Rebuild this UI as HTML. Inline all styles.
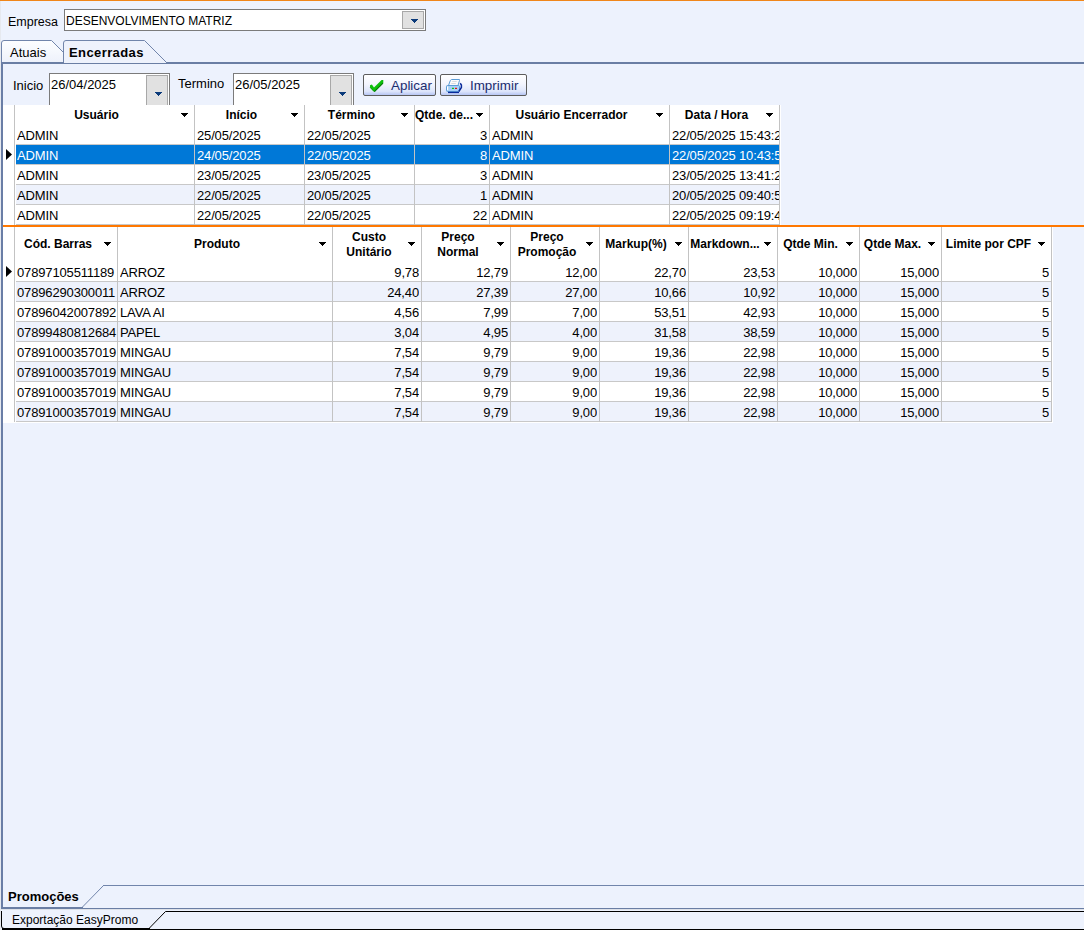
<!DOCTYPE html>
<html><head><meta charset="utf-8">
<style>
*{box-sizing:border-box;margin:0;padding:0}
html,body{width:1084px;height:930px;overflow:hidden;background:#edf2fd;font-family:"Liberation Sans",sans-serif;font-size:13px;color:#000}
.a{position:absolute}
.t{position:absolute;white-space:nowrap;line-height:16px}
.b{font-weight:bold}
.grid{position:absolute;background:#fff;overflow:hidden}
.vl{position:absolute;width:1px;background:#c3c3c3}
.hl{position:absolute;height:1px;background:#c8c8c8}
.cell{position:absolute;white-space:nowrap;overflow:hidden;line-height:20px;height:20px;letter-spacing:-0.15px}
.r{text-align:right}
.hd{position:absolute;font-weight:bold;font-size:12px;text-align:center;white-space:nowrap;overflow:hidden}
.arr{position:absolute;width:0;height:0;border-left:3.5px solid transparent;border-right:3.5px solid transparent;border-top:4px solid #000}
.navarr{position:absolute;width:0;height:0;border-left:3.5px solid transparent;border-right:3.5px solid transparent;border-top:4px solid #0b3a7a}
</style></head><body>
<!-- top orange line -->
<div class="a" style="left:0;top:0;width:1084px;height:1px;background:#f0861a"></div>
<div class="a" style="left:0;top:1px;width:1px;height:929px;background:#e6e9ef"></div>

<!-- Empresa -->
<div class="t" style="left:8px;top:14px;font-size:12.5px">Empresa</div>
<div class="a" style="left:64px;top:9px;width:362px;height:22px;border:1px solid #7b7b7b;background:#fff"></div>
<div class="t" style="left:66px;top:13px;font-size:12px">DESENVOLVIMENTO MATRIZ</div>
<div class="a" style="left:402px;top:11px;width:22px;height:18px;border:1px solid #a8a8a8;background:#e1e1e1"></div>
<svg class="a" style="left:411px;top:19px" width="7" height="4" shape-rendering="crispEdges" fill="#0b3a7a"><rect x="0" y="0" width="7" height="1"/><rect x="1" y="1" width="5" height="1"/><rect x="2" y="2" width="3" height="1"/><rect x="3" y="3" width="1" height="1"/></svg>

<!-- tabs -->
<svg class="a" style="left:0;top:0" width="1084" height="70">
  <defs><linearGradient id="tg" x1="0" y1="0" x2="0" y2="1"><stop offset="0" stop-color="#fdfeff"/><stop offset="1" stop-color="#edf1fb"/></linearGradient></defs><path d="M1.5 63 V43 Q1.5 40.5 4 40.5 H51.5 L63 52 V63 Z" fill="url(#tg)" stroke="none"/><path d="M1.5 63 V43 Q1.5 40.5 4 40.5 H51.5 L63 52" fill="none" stroke="#7185ab" stroke-width="1"/>
  <path d="M63.5 63 V43 Q63.5 40.5 66 40.5 H144.5 L166.5 62.5" fill="#eef2fc" stroke="#7185ab" stroke-width="1"/>
  <rect x="1" y="62" width="63" height="2" fill="#6a7ea4"/>
  <rect x="63" y="63" width="104" height="1" fill="#6a7ea4"/>
  <rect x="166" y="62" width="918" height="2" fill="#6a7ea4"/>
</svg>
<div class="t" style="left:10px;top:45px">Atuais</div>
<div class="t b" style="left:69px;top:45px;letter-spacing:0.4px">Encerradas</div>

<!-- panel left border -->
<div class="a" style="left:1px;top:62px;width:2px;height:847px;background:#6a7ea6"></div>

<!-- filters -->
<div class="t" style="left:13px;top:78px">Inicio</div>
<div class="a" style="left:49px;top:73px;width:121px;height:40px;border:1px solid #7b7b7b;background:#fff"></div>
<div class="t" style="left:51px;top:77px">26/04/2025</div>
<div class="a" style="left:146px;top:75px;width:22px;height:36px;border:1px solid #a8a8a8;background:#e1e1e1"></div>
<svg class="a" style="left:155px;top:92px" width="7" height="4" shape-rendering="crispEdges" fill="#0b3a7a"><rect x="0" y="0" width="7" height="1"/><rect x="1" y="1" width="5" height="1"/><rect x="2" y="2" width="3" height="1"/><rect x="3" y="3" width="1" height="1"/></svg>

<div class="t" style="left:178px;top:76px">Termino</div>
<div class="a" style="left:233px;top:73px;width:121px;height:40px;border:1px solid #7b7b7b;background:#fff"></div>
<div class="t" style="left:235px;top:77px">26/05/2025</div>
<div class="a" style="left:330px;top:75px;width:22px;height:36px;border:1px solid #a8a8a8;background:#e1e1e1"></div>
<svg class="a" style="left:339px;top:92px" width="7" height="4" shape-rendering="crispEdges" fill="#0b3a7a"><rect x="0" y="0" width="7" height="1"/><rect x="1" y="1" width="5" height="1"/><rect x="2" y="2" width="3" height="1"/><rect x="3" y="3" width="1" height="1"/></svg>

<!-- buttons -->
<div class="a" style="left:363px;top:74px;width:73px;height:22px;border:1px solid #5c5c5c;border-radius:2px;background:linear-gradient(#ffffff 0%,#f3f5fe 45%,#dde5fb 82%,#b6c5f4 100%)"></div>
<svg class="a" style="left:364px;top:75px" width="24" height="20"><path d="M6 10.2 L7.9 9.6 L10 12.6 L17.6 5 L19.3 5 L19.3 8 L10.2 17 L6 12.6 Z" fill="#0dbf0d"/><path d="M10.4 16.6 L19 8.2" stroke="#067206" stroke-width="1.1"/><path d="M6.2 12.4 L10 16.4" stroke="#089408" stroke-width="0.8"/></svg>
<div class="t" style="left:391px;top:78px;color:#1b2c6e;font-size:13.4px">Aplicar</div>
<div class="a" style="left:440px;top:74px;width:87px;height:22px;border:1px solid #5c5c5c;border-radius:2px;background:linear-gradient(#ffffff 0%,#f3f5fe 45%,#dde5fb 82%,#b6c5f4 100%)"></div>
<svg class="a" style="left:442px;top:75px" width="22" height="20">
 <path d="M9.5 4.5 H17.5 V5.5 L16 10.5 H6.5 L8.3 5.5 Z" fill="#fafafa" stroke="#5b9bd5" stroke-width="1"/>
 <rect x="10.2" y="6" width="4.5" height="0.8" fill="#cfd3d8"/><rect x="9.3" y="8" width="4.5" height="0.8" fill="#cfd3d8"/>
 <rect x="4.5" y="10.5" width="13" height="6" rx="1" fill="#a6cff7" stroke="#5b9bd5" stroke-width="1"/>
 <rect x="5" y="11.5" width="1.2" height="3.5" fill="#fff"/>
 <path d="M18.2 8.3 L19.4 10 V12.5 L16.8 16.5" stroke="#0a2a9a" stroke-width="1.5" fill="none"/>
 <rect x="6" y="16.8" width="11" height="1.3" fill="#0a2a9a"/>
 <rect x="10" y="12.8" width="2" height="1.2" fill="#10c010"/><rect x="13" y="12.8" width="2" height="1.2" fill="#e01010"/>
</svg>
<div class="t" style="left:470px;top:78px;color:#1b2c6e;font-size:13.4px">Imprimir</div>

<!-- GRID 1 -->
<div class="grid" style="left:3px;top:105px;width:778px;height:120px">
<div class="hl" style="left:13px;top:39px;width:764px"></div>
<div class="a" style="left:13px;top:40px;width:763px;height:19px;background:#0078d7"></div>
<div class="hl" style="left:13px;top:59px;width:764px"></div>
<div class="hl" style="left:13px;top:79px;width:764px"></div>
<div class="a" style="left:13px;top:80px;width:763px;height:19px;background:#eef2fc"></div>
<div class="hl" style="left:13px;top:99px;width:764px"></div>
<div class="hl" style="left:13px;top:119px;width:764px"></div>
<div class="vl" style="left:11px;top:0;height:120px"></div>
<div class="vl" style="left:191px;top:0;height:120px"></div>
<div class="vl" style="left:301px;top:0;height:120px"></div>
<div class="vl" style="left:411px;top:0;height:120px"></div>
<div class="vl" style="left:486px;top:0;height:120px"></div>
<div class="vl" style="left:666px;top:0;height:120px"></div>
<div class="vl" style="left:776px;top:0;height:120px"></div>
<div class="hd" style="left:12px;top:0;width:163px;height:20px;line-height:20px">Usuário</div>
<svg class="a" style="left:178px;top:8px" width="7" height="4" shape-rendering="crispEdges"><rect x="0" y="0" width="7" height="1"/><rect x="1" y="1" width="5" height="1"/><rect x="2" y="2" width="3" height="1"/><rect x="3" y="3" width="1" height="1"/></svg>
<div class="hd" style="left:192px;top:0;width:93px;height:20px;line-height:20px">Início</div>
<svg class="a" style="left:288px;top:8px" width="7" height="4" shape-rendering="crispEdges"><rect x="0" y="0" width="7" height="1"/><rect x="1" y="1" width="5" height="1"/><rect x="2" y="2" width="3" height="1"/><rect x="3" y="3" width="1" height="1"/></svg>
<div class="hd" style="left:302px;top:0;width:93px;height:20px;line-height:20px">Término</div>
<svg class="a" style="left:398px;top:8px" width="7" height="4" shape-rendering="crispEdges"><rect x="0" y="0" width="7" height="1"/><rect x="1" y="1" width="5" height="1"/><rect x="2" y="2" width="3" height="1"/><rect x="3" y="3" width="1" height="1"/></svg>
<div class="hd" style="left:412px;top:0;width:58px;height:20px;line-height:20px">Qtde. de...</div>
<svg class="a" style="left:473px;top:8px" width="7" height="4" shape-rendering="crispEdges"><rect x="0" y="0" width="7" height="1"/><rect x="1" y="1" width="5" height="1"/><rect x="2" y="2" width="3" height="1"/><rect x="3" y="3" width="1" height="1"/></svg>
<div class="hd" style="left:487px;top:0;width:163px;height:20px;line-height:20px">Usuário Encerrador</div>
<svg class="a" style="left:653px;top:8px" width="7" height="4" shape-rendering="crispEdges"><rect x="0" y="0" width="7" height="1"/><rect x="1" y="1" width="5" height="1"/><rect x="2" y="2" width="3" height="1"/><rect x="3" y="3" width="1" height="1"/></svg>
<div class="hd" style="left:667px;top:0;width:93px;height:20px;line-height:20px">Data / Hora</div>
<svg class="a" style="left:763px;top:8px" width="7" height="4" shape-rendering="crispEdges"><rect x="0" y="0" width="7" height="1"/><rect x="1" y="1" width="5" height="1"/><rect x="2" y="2" width="3" height="1"/><rect x="3" y="3" width="1" height="1"/></svg>
<div class="cell" style="left:14px;top:21px;width:177px;color:#000">ADMIN</div>
<div class="cell" style="left:194px;top:21px;width:107px;color:#000">25/05/2025</div>
<div class="cell" style="left:304px;top:21px;width:107px;color:#000">22/05/2025</div>
<div class="cell r" style="left:412px;top:21px;width:72px;color:#000">3</div>
<div class="cell" style="left:489px;top:21px;width:177px;color:#000">ADMIN</div>
<div class="cell" style="left:669px;top:21px;width:107px;color:#000">22/05/2025 15:43:22</div>
<div class="cell" style="left:14px;top:41px;width:177px;color:#fff">ADMIN</div>
<div class="cell" style="left:194px;top:41px;width:107px;color:#fff">24/05/2025</div>
<div class="cell" style="left:304px;top:41px;width:107px;color:#fff">22/05/2025</div>
<div class="cell r" style="left:412px;top:41px;width:72px;color:#fff">8</div>
<div class="cell" style="left:489px;top:41px;width:177px;color:#fff">ADMIN</div>
<div class="cell" style="left:669px;top:41px;width:107px;color:#fff">22/05/2025 10:43:55</div>
<div class="cell" style="left:14px;top:61px;width:177px;color:#000">ADMIN</div>
<div class="cell" style="left:194px;top:61px;width:107px;color:#000">23/05/2025</div>
<div class="cell" style="left:304px;top:61px;width:107px;color:#000">23/05/2025</div>
<div class="cell r" style="left:412px;top:61px;width:72px;color:#000">3</div>
<div class="cell" style="left:489px;top:61px;width:177px;color:#000">ADMIN</div>
<div class="cell" style="left:669px;top:61px;width:107px;color:#000">23/05/2025 13:41:22</div>
<div class="cell" style="left:14px;top:81px;width:177px;color:#000">ADMIN</div>
<div class="cell" style="left:194px;top:81px;width:107px;color:#000">22/05/2025</div>
<div class="cell" style="left:304px;top:81px;width:107px;color:#000">20/05/2025</div>
<div class="cell r" style="left:412px;top:81px;width:72px;color:#000">1</div>
<div class="cell" style="left:489px;top:81px;width:177px;color:#000">ADMIN</div>
<div class="cell" style="left:669px;top:81px;width:107px;color:#000">20/05/2025 09:40:55</div>
<div class="cell" style="left:14px;top:101px;width:177px;color:#000">ADMIN</div>
<div class="cell" style="left:194px;top:101px;width:107px;color:#000">22/05/2025</div>
<div class="cell" style="left:304px;top:101px;width:107px;color:#000">22/05/2025</div>
<div class="cell r" style="left:412px;top:101px;width:72px;color:#000">22</div>
<div class="cell" style="left:489px;top:101px;width:177px;color:#000">ADMIN</div>
<div class="cell" style="left:669px;top:101px;width:107px;color:#000">22/05/2025 09:19:44</div>
<svg class="a" style="left:3px;top:44px" width="7" height="11"><path d="M0 0 L6 5.5 L0 11 Z" fill="#000"/></svg>
</div>
<!-- splitter -->
<div class="a" style="left:3px;top:225px;width:1081px;height:2px;background:#ff7800"></div>

<!-- GRID 2 -->
<div class="grid" style="left:3px;top:227px;width:1050px;height:196px">
<div class="hl" style="left:13px;top:54px;width:1036px"></div>
<div class="a" style="left:13px;top:55px;width:1035px;height:19px;background:#eef2fc"></div>
<div class="hl" style="left:13px;top:74px;width:1036px"></div>
<div class="hl" style="left:13px;top:94px;width:1036px"></div>
<div class="a" style="left:13px;top:95px;width:1035px;height:19px;background:#eef2fc"></div>
<div class="hl" style="left:13px;top:114px;width:1036px"></div>
<div class="hl" style="left:13px;top:134px;width:1036px"></div>
<div class="a" style="left:13px;top:135px;width:1035px;height:19px;background:#eef2fc"></div>
<div class="hl" style="left:13px;top:154px;width:1036px"></div>
<div class="hl" style="left:13px;top:174px;width:1036px"></div>
<div class="a" style="left:13px;top:175px;width:1035px;height:19px;background:#eef2fc"></div>
<div class="hl" style="left:13px;top:194px;width:1036px"></div>
<div class="vl" style="left:11px;top:0;height:195px"></div>
<div class="vl" style="left:114px;top:0;height:195px"></div>
<div class="vl" style="left:329px;top:0;height:195px"></div>
<div class="vl" style="left:418px;top:0;height:195px"></div>
<div class="vl" style="left:507px;top:0;height:195px"></div>
<div class="vl" style="left:596px;top:0;height:195px"></div>
<div class="vl" style="left:685px;top:0;height:195px"></div>
<div class="vl" style="left:774px;top:0;height:195px"></div>
<div class="vl" style="left:856px;top:0;height:195px"></div>
<div class="vl" style="left:938px;top:0;height:195px"></div>
<div class="vl" style="left:1048px;top:0;height:195px"></div>
<div class="hd" style="left:12px;top:0;width:86px;height:35px;line-height:35px">Cód. Barras</div>
<svg class="a" style="left:101px;top:15px" width="7" height="4" shape-rendering="crispEdges"><rect x="0" y="0" width="7" height="1"/><rect x="1" y="1" width="5" height="1"/><rect x="2" y="2" width="3" height="1"/><rect x="3" y="3" width="1" height="1"/></svg>
<div class="hd" style="left:115px;top:0;width:198px;height:35px;line-height:35px">Produto</div>
<svg class="a" style="left:316px;top:15px" width="7" height="4" shape-rendering="crispEdges"><rect x="0" y="0" width="7" height="1"/><rect x="1" y="1" width="5" height="1"/><rect x="2" y="2" width="3" height="1"/><rect x="3" y="3" width="1" height="1"/></svg>
<div class="hd" style="left:330px;top:3px;width:72px;line-height:15px">Custo<br>Unitário</div>
<svg class="a" style="left:405px;top:15px" width="7" height="4" shape-rendering="crispEdges"><rect x="0" y="0" width="7" height="1"/><rect x="1" y="1" width="5" height="1"/><rect x="2" y="2" width="3" height="1"/><rect x="3" y="3" width="1" height="1"/></svg>
<div class="hd" style="left:419px;top:3px;width:72px;line-height:15px">Preço<br>Normal</div>
<svg class="a" style="left:494px;top:15px" width="7" height="4" shape-rendering="crispEdges"><rect x="0" y="0" width="7" height="1"/><rect x="1" y="1" width="5" height="1"/><rect x="2" y="2" width="3" height="1"/><rect x="3" y="3" width="1" height="1"/></svg>
<div class="hd" style="left:508px;top:3px;width:72px;line-height:15px">Preço<br>Promoção</div>
<svg class="a" style="left:583px;top:15px" width="7" height="4" shape-rendering="crispEdges"><rect x="0" y="0" width="7" height="1"/><rect x="1" y="1" width="5" height="1"/><rect x="2" y="2" width="3" height="1"/><rect x="3" y="3" width="1" height="1"/></svg>
<div class="hd" style="left:597px;top:0;width:72px;height:35px;line-height:35px">Markup(%)</div>
<svg class="a" style="left:672px;top:15px" width="7" height="4" shape-rendering="crispEdges"><rect x="0" y="0" width="7" height="1"/><rect x="1" y="1" width="5" height="1"/><rect x="2" y="2" width="3" height="1"/><rect x="3" y="3" width="1" height="1"/></svg>
<div class="hd" style="left:686px;top:0;width:72px;height:35px;line-height:35px">Markdown...</div>
<svg class="a" style="left:761px;top:15px" width="7" height="4" shape-rendering="crispEdges"><rect x="0" y="0" width="7" height="1"/><rect x="1" y="1" width="5" height="1"/><rect x="2" y="2" width="3" height="1"/><rect x="3" y="3" width="1" height="1"/></svg>
<div class="hd" style="left:775px;top:0;width:65px;height:35px;line-height:35px">Qtde Min.</div>
<svg class="a" style="left:843px;top:15px" width="7" height="4" shape-rendering="crispEdges"><rect x="0" y="0" width="7" height="1"/><rect x="1" y="1" width="5" height="1"/><rect x="2" y="2" width="3" height="1"/><rect x="3" y="3" width="1" height="1"/></svg>
<div class="hd" style="left:857px;top:0;width:65px;height:35px;line-height:35px">Qtde Max.</div>
<svg class="a" style="left:925px;top:15px" width="7" height="4" shape-rendering="crispEdges"><rect x="0" y="0" width="7" height="1"/><rect x="1" y="1" width="5" height="1"/><rect x="2" y="2" width="3" height="1"/><rect x="3" y="3" width="1" height="1"/></svg>
<div class="hd" style="left:939px;top:0;width:93px;height:35px;line-height:35px">Limite por CPF</div>
<svg class="a" style="left:1035px;top:15px" width="7" height="4" shape-rendering="crispEdges"><rect x="0" y="0" width="7" height="1"/><rect x="1" y="1" width="5" height="1"/><rect x="2" y="2" width="3" height="1"/><rect x="3" y="3" width="1" height="1"/></svg>
<div class="cell" style="left:14px;top:36px;width:100px;color:#000">07897105511189</div>
<div class="cell" style="left:117px;top:36px;width:212px;color:#000">ARROZ</div>
<div class="cell r" style="left:330px;top:36px;width:86px;color:#000">9,78</div>
<div class="cell r" style="left:419px;top:36px;width:86px;color:#000">12,79</div>
<div class="cell r" style="left:508px;top:36px;width:86px;color:#000">12,00</div>
<div class="cell r" style="left:597px;top:36px;width:86px;color:#000">22,70</div>
<div class="cell r" style="left:686px;top:36px;width:86px;color:#000">23,53</div>
<div class="cell r" style="left:775px;top:36px;width:79px;color:#000">10,000</div>
<div class="cell r" style="left:857px;top:36px;width:79px;color:#000">15,000</div>
<div class="cell r" style="left:939px;top:36px;width:107px;color:#000">5</div>
<div class="cell" style="left:14px;top:56px;width:100px;color:#000">07896290300011</div>
<div class="cell" style="left:117px;top:56px;width:212px;color:#000">ARROZ</div>
<div class="cell r" style="left:330px;top:56px;width:86px;color:#000">24,40</div>
<div class="cell r" style="left:419px;top:56px;width:86px;color:#000">27,39</div>
<div class="cell r" style="left:508px;top:56px;width:86px;color:#000">27,00</div>
<div class="cell r" style="left:597px;top:56px;width:86px;color:#000">10,66</div>
<div class="cell r" style="left:686px;top:56px;width:86px;color:#000">10,92</div>
<div class="cell r" style="left:775px;top:56px;width:79px;color:#000">10,000</div>
<div class="cell r" style="left:857px;top:56px;width:79px;color:#000">15,000</div>
<div class="cell r" style="left:939px;top:56px;width:107px;color:#000">5</div>
<div class="cell" style="left:14px;top:76px;width:100px;color:#000">07896042007892</div>
<div class="cell" style="left:117px;top:76px;width:212px;color:#000">LAVA AI</div>
<div class="cell r" style="left:330px;top:76px;width:86px;color:#000">4,56</div>
<div class="cell r" style="left:419px;top:76px;width:86px;color:#000">7,99</div>
<div class="cell r" style="left:508px;top:76px;width:86px;color:#000">7,00</div>
<div class="cell r" style="left:597px;top:76px;width:86px;color:#000">53,51</div>
<div class="cell r" style="left:686px;top:76px;width:86px;color:#000">42,93</div>
<div class="cell r" style="left:775px;top:76px;width:79px;color:#000">10,000</div>
<div class="cell r" style="left:857px;top:76px;width:79px;color:#000">15,000</div>
<div class="cell r" style="left:939px;top:76px;width:107px;color:#000">5</div>
<div class="cell" style="left:14px;top:96px;width:100px;color:#000">07899480812684</div>
<div class="cell" style="left:117px;top:96px;width:212px;color:#000">PAPEL</div>
<div class="cell r" style="left:330px;top:96px;width:86px;color:#000">3,04</div>
<div class="cell r" style="left:419px;top:96px;width:86px;color:#000">4,95</div>
<div class="cell r" style="left:508px;top:96px;width:86px;color:#000">4,00</div>
<div class="cell r" style="left:597px;top:96px;width:86px;color:#000">31,58</div>
<div class="cell r" style="left:686px;top:96px;width:86px;color:#000">38,59</div>
<div class="cell r" style="left:775px;top:96px;width:79px;color:#000">10,000</div>
<div class="cell r" style="left:857px;top:96px;width:79px;color:#000">15,000</div>
<div class="cell r" style="left:939px;top:96px;width:107px;color:#000">5</div>
<div class="cell" style="left:14px;top:116px;width:100px;color:#000">07891000357019</div>
<div class="cell" style="left:117px;top:116px;width:212px;color:#000">MINGAU</div>
<div class="cell r" style="left:330px;top:116px;width:86px;color:#000">7,54</div>
<div class="cell r" style="left:419px;top:116px;width:86px;color:#000">9,79</div>
<div class="cell r" style="left:508px;top:116px;width:86px;color:#000">9,00</div>
<div class="cell r" style="left:597px;top:116px;width:86px;color:#000">19,36</div>
<div class="cell r" style="left:686px;top:116px;width:86px;color:#000">22,98</div>
<div class="cell r" style="left:775px;top:116px;width:79px;color:#000">10,000</div>
<div class="cell r" style="left:857px;top:116px;width:79px;color:#000">15,000</div>
<div class="cell r" style="left:939px;top:116px;width:107px;color:#000">5</div>
<div class="cell" style="left:14px;top:136px;width:100px;color:#000">07891000357019</div>
<div class="cell" style="left:117px;top:136px;width:212px;color:#000">MINGAU</div>
<div class="cell r" style="left:330px;top:136px;width:86px;color:#000">7,54</div>
<div class="cell r" style="left:419px;top:136px;width:86px;color:#000">9,79</div>
<div class="cell r" style="left:508px;top:136px;width:86px;color:#000">9,00</div>
<div class="cell r" style="left:597px;top:136px;width:86px;color:#000">19,36</div>
<div class="cell r" style="left:686px;top:136px;width:86px;color:#000">22,98</div>
<div class="cell r" style="left:775px;top:136px;width:79px;color:#000">10,000</div>
<div class="cell r" style="left:857px;top:136px;width:79px;color:#000">15,000</div>
<div class="cell r" style="left:939px;top:136px;width:107px;color:#000">5</div>
<div class="cell" style="left:14px;top:156px;width:100px;color:#000">07891000357019</div>
<div class="cell" style="left:117px;top:156px;width:212px;color:#000">MINGAU</div>
<div class="cell r" style="left:330px;top:156px;width:86px;color:#000">7,54</div>
<div class="cell r" style="left:419px;top:156px;width:86px;color:#000">9,79</div>
<div class="cell r" style="left:508px;top:156px;width:86px;color:#000">9,00</div>
<div class="cell r" style="left:597px;top:156px;width:86px;color:#000">19,36</div>
<div class="cell r" style="left:686px;top:156px;width:86px;color:#000">22,98</div>
<div class="cell r" style="left:775px;top:156px;width:79px;color:#000">10,000</div>
<div class="cell r" style="left:857px;top:156px;width:79px;color:#000">15,000</div>
<div class="cell r" style="left:939px;top:156px;width:107px;color:#000">5</div>
<div class="cell" style="left:14px;top:176px;width:100px;color:#000">07891000357019</div>
<div class="cell" style="left:117px;top:176px;width:212px;color:#000">MINGAU</div>
<div class="cell r" style="left:330px;top:176px;width:86px;color:#000">7,54</div>
<div class="cell r" style="left:419px;top:176px;width:86px;color:#000">9,79</div>
<div class="cell r" style="left:508px;top:176px;width:86px;color:#000">9,00</div>
<div class="cell r" style="left:597px;top:176px;width:86px;color:#000">19,36</div>
<div class="cell r" style="left:686px;top:176px;width:86px;color:#000">22,98</div>
<div class="cell r" style="left:775px;top:176px;width:79px;color:#000">10,000</div>
<div class="cell r" style="left:857px;top:176px;width:79px;color:#000">15,000</div>
<div class="cell r" style="left:939px;top:176px;width:107px;color:#000">5</div>
<svg class="a" style="left:3px;top:39px" width="7" height="11"><path d="M0 0 L6 5.5 L0 11 Z" fill="#000"/></svg>
</div>
<!-- bottom tabs -->
<svg class="a" style="left:0;top:860px" width="1084" height="70">
  <rect x="1" y="25.5" width="1083" height="0" fill="none"/>
  <path d="M103 25.5 H1084" stroke="#7185ab" stroke-width="1" fill="none"/>
  <path d="M82 47.5 L103.5 25.5" stroke="#7185ab" stroke-width="1" fill="none"/>
  <rect x="1" y="47" width="82" height="2" fill="#6a7ea4"/>
  <rect x="82" y="48" width="1002" height="1" fill="#6a7ea4"/>
  <rect x="1" y="49" width="1083" height="1" fill="#dde1e8"/>
  <path d="M1.5 51 V66 Q1.5 68.5 4 68.5" stroke="#000" stroke-width="1" fill="none"/>
  <path d="M149 68.5 L165.5 51.5 H1084" stroke="#000" stroke-width="1" fill="none"/>
  <rect x="2" y="68" width="148" height="2" fill="#000"/>
  <rect x="149" y="69" width="935" height="1" fill="#000"/>
</svg>
<div class="t b" style="left:8px;top:889px">Promoções</div>
<div class="t" style="left:12px;top:912px;font-size:12px">Exportação EasyPromo</div>
</body></html>
